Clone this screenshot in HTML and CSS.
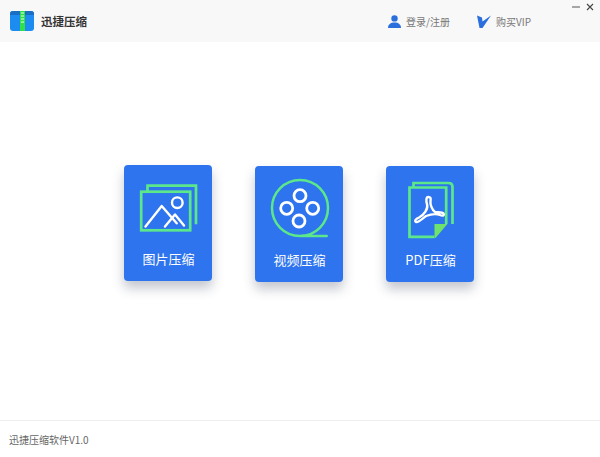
FILE: index.html
```
<!DOCTYPE html>
<html lang="zh">
<head>
<meta charset="utf-8">
<title>迅捷压缩</title>
<link rel="stylesheet" href="styles.css">
</head>
<body>
<div class="app">
  <header class="top">
    <svg class="logo" viewBox="0 0 24 20" width="24" height="20">
      <path d="M0 3a3 3 0 0 1 3-3h18a3 3 0 0 1 3 3v14a3 3 0 0 1-3 3H3a3 3 0 0 1-3-3z" fill="#1c8cf0"/>
      <path d="M0 3a3 3 0 0 1 3-3h18a3 3 0 0 1 3 3v1H0z" fill="#1a6fc4"/>
      <rect x="10" y="0" width="5" height="20" fill="#2fe04a"/>
      <path d="M11 2h3M11 5h3M11 8h3M11 11h3" stroke="#e8ffe8" stroke-width="1"/>
    </svg>
    <span class="title">迅捷压缩</span>
    <div class="user">
      <svg class="user-icon" viewBox="0 0 13 13" width="13" height="13">
        <circle cx="6.5" cy="3.4" r="3.2" fill="#2a6fdc"/>
        <path d="M0 13c0-3.800 2.600-5.600 6.500-5.600S13 9.200 13 13z" fill="#2a6fdc"/>
      </svg>
      <span class="link">登录/注册</span>
    </div>
    <div class="vip">
      <svg class="vip-icon" viewBox="0 0 14 13" width="14" height="13">
        <path d="M0 0.500L5 2.500 5.500 6.500 14 0.500 5.500 13H2.500z" fill="#2a6fdc"/>
      </svg>
      <span class="link">购买VIP</span>
    </div>
    <div class="win">
      <svg viewBox="0 0 8 8" width="8" height="8"><path d="M0 4h8" stroke="#555" stroke-width="1"/></svg>
      <svg viewBox="0 0 8 8" width="8" height="8"><path d="M1 1l6 6M7 1L1 7" stroke="#444" stroke-width="1.100"/></svg>
    </div>
  </header>
  <main class="main">
    <a class="card card-first">
      <svg class="art" viewBox="0 0 60 54" width="60" height="54" fill="none">
        <g stroke="#5ce88a" stroke-width="2.700">
          <path d="M9.500 10.700V4.700H58V43.300"/>
          <rect x="3.200" y="10.700" width="49" height="38.600"/>
        </g>
        <g stroke="#fff" stroke-width="2.400" stroke-linecap="round" stroke-linejoin="round">
          <path d="M7.500 45.500L23.700 25 38.700 42.300"/>
          <path d="M27 45.500L37 33.500 46 44.500"/>
          <circle cx="39.300" cy="21.700" r="5.300"/>
        </g>
      </svg>
      <span class="label">图片压缩</span>
    </a>
    <a class="card">
      <svg class="art" viewBox="0 0 60 54" width="60" height="54" fill="none">
        <circle cx="31" cy="26" r="28" stroke="#5ce88a" stroke-width="2.500"/>
        <path d="M33 54H57.700" stroke="#5ce88a" stroke-width="2.500" stroke-linecap="round"/>
        <g stroke="#fff" stroke-width="2.800">
          <circle cx="31" cy="13.700" r="6"/>
          <circle cx="17.700" cy="26.300" r="6"/>
          <circle cx="43.700" cy="26.300" r="6"/>
          <circle cx="30" cy="39" r="6"/>
        </g>
      </svg>
      <span class="label">视频压缩</span>
    </a>
    <a class="card">
      <svg class="art" viewBox="0 0 60 54" width="60" height="54" fill="none">
        <g stroke="#5ce88a" stroke-width="2.700">
          <path d="M13.500 5V1H48.500Q52.500 1 52.500 5V42"/>
          <path d="M34.500 54.800H9.500V5.500H46.200V42" fill="#2e74ee"/>
        </g>
        <path d="M34.500 42H47.400L35.500 56H34.500Z" fill="#6ee26a"/>
        <path d="M28.300 15C26 15 26 19 27 22 28.500 27 24 33 19 35.500 15.500 37 14.500 39 16 40 18 41 22 37 26 34 30 32.500 36 31.500 40 33 43 34.500 44.500 33 43.500 31.500 42 30 38 30.500 35 30 32 28 30 22 30.500 19 31 16 30.500 15 28.300 15Z" stroke="#fff" stroke-width="2.400" stroke-linejoin="round"/>
      </svg>
      <span class="label">PDF压缩</span>
    </a>
  </main>
  <footer class="foot">迅捷压缩软件V1.0</footer>
</div>
</body>
</html>
```
FILE: styles.css
```
* { box-sizing: border-box; }
html, body { margin: 0; height: 100%; background: #fff; }
body { font-family: "Noto Sans CJK SC", "Liberation Sans", sans-serif; overflow: hidden; }
.app { width: 600px; height: 457px; display: flex; flex-direction: column; }
.top { height: 42px; flex: none; background: #f8f8f8; display: flex; align-items: center; padding-left: 10px; position: relative; }
.logo { flex: none; }
.title { margin-left: 7px; font-size: 11.5px; font-weight: 700; color: #333; }
.user { margin-left: auto; display: flex; align-items: center; gap: 5px; }
.user-icon, .vip-icon { flex: none; }
.vip { margin-left: 27px; display: flex; align-items: center; gap: 5px; margin-right: 69px; }
.link { font-size: 10px; color: #777; }
.win { position: absolute; top: 3px; right: 6px; display: flex; gap: 6px; }
.main { flex: 1; display: flex; align-items: flex-start; justify-content: center; gap: 43px; padding: 124px 2px 0 0; }
.card { width: 88px; height: 116px; background: #2e74ee; border-radius: 4px; box-shadow: 0 7px 12px rgba(40, 50, 80, .28); display: flex; flex-direction: column; align-items: center; padding: 16px 0 0 1px; }
.card-first { margin-top: -1px; }
.art { flex: none; overflow: visible; margin-left: -1px; }
.label { margin-top: 14px; font-size: 13px; line-height: 20px; color: #fff; }
.foot { height: 37px; flex: none; border-top: 1px solid #eee; padding: 10px 0 0 9px; font-size: 10px; line-height: 18px; color: #666; }
```
